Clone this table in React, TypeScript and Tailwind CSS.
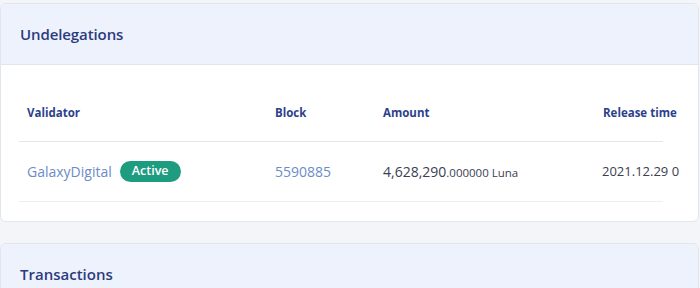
export default function App() {
  const font = { fontFamily: '"Open Sans", "Liberation Sans", sans-serif' };
  return (
    <div className="w-[700px] h-[288px] overflow-hidden bg-[#f4f5f8] pt-[3px]" style={font}>
      <div className="w-[699px] rounded-md border border-[#e1e5ec] bg-white overflow-hidden">
        <div className="h-[61px] bg-[#edf2fc] border-b border-[#e1e5ec] flex items-center px-[19px]">
          <h2 className="text-[15px] font-semibold text-[#2b3b7e] tracking-[-0.1px]">Undelegations</h2>
        </div>
        <div className="pl-[18px] w-[678px] overflow-hidden pb-[19px]">
          <div className="w-[644px]">
            <div className="flex items-center h-[77px] pt-[20px] text-[11.5px] font-bold text-[#2c3f8c] border-b border-[#e3e6ec] whitespace-nowrap">
              <div className="w-[256px] shrink-0 pl-[8px]">Validator</div>
              <div className="w-[108px] shrink-0">Block</div>
              <div className="w-[220px] shrink-0">Amount</div>
              <div className="shrink-0">Release time</div>
            </div>
            <div className="flex items-center h-[60px] text-[14px] border-b border-[#eceef2] whitespace-nowrap">
              <div className="w-[256px] shrink-0 pl-[8px] flex items-center gap-[8px]">
                <span className="text-[#6b8cc7]">GalaxyDigital</span>
                <span className="h-[21px] px-[12px] rounded-full bg-[#1e9c7f] text-white text-[12.5px] font-semibold flex items-center">Active</span>
              </div>
              <div className="w-[108px] shrink-0 text-[#6b8cc7]">5590885</div>
              <div className="w-[219px] shrink-0 text-[#3a4050]">
                4,628,290<span className="text-[11.5px]">.000000 Luna</span>
              </div>
              <div className="shrink-0 text-[13px] text-[#3a4050]">2021.12.29 07:43:12</div>
            </div>
          </div>
        </div>
      </div>
      <div className="mt-[21px] w-[699px] rounded-md border border-[#e1e5ec] bg-white overflow-hidden">
        <div className="h-[61px] bg-[#edf2fc] border-b border-[#e1e5ec] flex items-center px-[19px]">
          <h2 className="text-[15px] font-semibold text-[#2b3b7e]">Transactions</h2>
        </div>
      </div>
    </div>
  );
}
